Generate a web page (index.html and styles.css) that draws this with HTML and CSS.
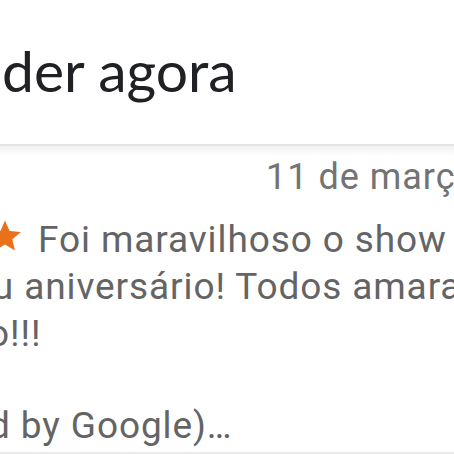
FILE: index.html
```html
<!DOCTYPE html>
<html lang="pt">
<head>
<meta charset="utf-8">
<link rel="stylesheet" href="styles.css">
</head>
<body>
<div class="screen">
  <header class="reply-bar">
    <div class="reply-title">der agora</div>
  </header>
  <div class="divider"></div>
  <section class="review">
    <div class="review-date">11 de março de 2019</div>
    <div class="review-body">
      <div class="line line-1"><svg class="star" viewBox="0 0 24 24" width="38" height="38"><path d="M12 2.2l2.9 6.6 7.2.6-5.5 4.7 1.7 7.1L12 17.4l-6.3 3.8 1.7-7.1L1.9 9.4l7.2-.6z" fill="#e8711a"/></svg><span>Foi maravilhoso o show de</span></div>
      <div class="line line-2">meu aniversário! Todos amaram</div>
      <div class="line line-3">o!!!</div>
      <div class="line line-4">&nbsp;</div>
      <div class="line line-5">d by Google)…</div>
    </div>
  </section>
  <div class="bottom-rule"></div>
</div>
</body>
</html>
```
FILE: styles.css
```css
html, body {
  margin: 0;
  padding: 0;
  background: #ffffff;
  overflow: hidden;
}
.screen {
  width: 454px;
  height: 454px;
  overflow: hidden;
  display: flex;
  flex-direction: column;
}
.reply-bar {
  height: 148px;
  display: flex;
  align-items: flex-start;
}
.reply-title {
  font-family: "Lato", "Open Sans", sans-serif;
  font-size: 57px;
  line-height: 1;
  color: #202124;
  padding-top: 42px;
  padding-left: 2px;
  white-space: nowrap;
}
.divider {
  height: 10px;
  border-top: 2px solid #e4e4e4;
  background: linear-gradient(#f1f1f1, #ffffff);
}
.review {
  font-family: "Roboto", "Noto Sans", sans-serif;
  white-space: nowrap;
}
.review-date {
  font-size: 36px;
  line-height: 40px;
  letter-spacing: 1px;
  color: #737373;
  padding-left: 266px;
  margin-top: 1px;
}
.review-body {
  font-size: 37px;
  line-height: 47px;
  letter-spacing: 0.9px;
  color: #646464;
  margin-top: 19px;
}
.line {
  height: 47px;
}
.line-1 {
  display: flex;
  align-items: center;
  gap: 14px;
  margin-left: -14px;
}
.star {
  flex: none;
  align-self: flex-start;
  margin-top: 1px;
}
.line-2 {
  margin-left: -61px;
}
.line-3 {
  margin-left: -12px;
}
.line-4 {
  height: 45px;
}
.line-5 {
  margin-left: -11px;
}
.bottom-rule {
  height: 2px;
  background: #ebebeb;
  margin-top: 3px;
}
```
